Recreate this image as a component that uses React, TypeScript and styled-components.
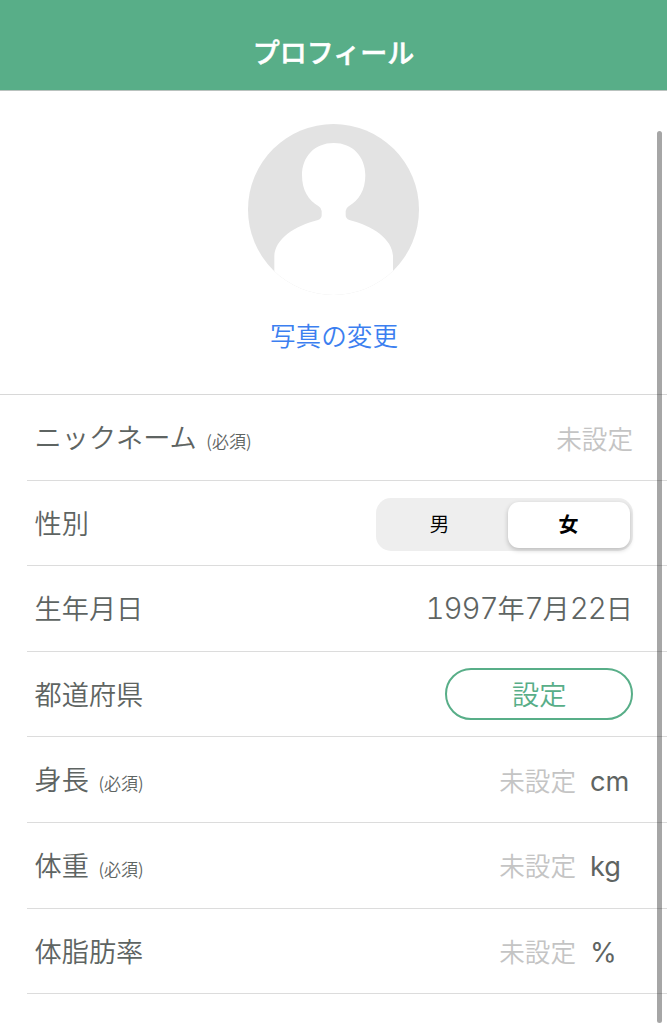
import React from 'react';
import styled, { createGlobalStyle } from 'styled-components';

const GlobalStyle = createGlobalStyle`
  * { box-sizing: border-box; }
  html, body { margin: 0; background: #fff; overflow: hidden; }
  body, button { font-family: 'Noto Sans CJK JP', sans-serif; font-weight: 350; }
`;

const Screen = styled.div`
  position: relative;
  width: 667px;
  height: 1024px;
  overflow: hidden;
  background: #fff;
  color: #5e6462;
`;

const Header = styled.header`
  display: flex;
  align-items: center;
  justify-content: center;
  height: 91px;
  padding-top: 14px;
  background: #58ae88;
  border-bottom: 1px solid #b9c2be;
`;

const Title = styled.h1`
  margin: 0;
  font-size: 27px;
  line-height: 40px;
  font-weight: 500;
  -webkit-text-stroke: 0.5px #fff;
  color: #fff;
`;

const PhotoSection = styled.section`
  display: flex;
  flex-direction: column;
  align-items: center;
  height: 304px;
  padding-top: 33px;
  border-bottom: 1px solid #d8d8d8;
`;

const Avatar = styled.svg`
  display: block;
  width: 171px;
  height: 171px;
`;

const ChangePhoto = styled.button`
  margin: 20px 0 0 1px;
  padding: 0;
  border: 0;
  background: none;
  font-size: 25.6px;
  line-height: 40px;
  color: #3c7ff0;
`;

const Row = styled.div`
  display: flex;
  align-items: center;
  justify-content: space-between;
  height: 85.6px;
  margin-left: 27px;
  padding: 0 34px 0 7.5px;
  border-bottom: 1px solid #dcdcdc;
`;

const Label = styled.div<{ $required?: boolean }>`
  display: flex;
  align-items: baseline;
  gap: 9.5px;
  padding: ${p => (p.$required ? '2px 0 0' : '0 0 2px')};
  font-size: 27.2px;
  line-height: 40px;
`;

const Required = styled.span`
  font-size: 17px;
`;

const Value = styled.div`
  display: flex;
  align-items: baseline;
  font-size: 27.2px;
  line-height: 40px;
`;

const DateValue = styled(Value)`
  padding-bottom: 2px;
`;

const Unset = styled.span`
  padding-top: 2px;
  font-size: 25.6px;
  color: #c4c4c4;
`;

const Digits = styled.span`
  font-family: Inter, 'Liberation Sans', sans-serif;
  font-size: 29.5px;
  font-weight: 350;
  font-variant-numeric: tabular-nums;
  letter-spacing: -1.1px;
`;

const Unit = styled.span`
  width: 44px;
  margin-left: 14px;
  margin-right: -1px;
  font-family: Inter, 'Liberation Sans', sans-serif;
  font-size: 27.2px;
  font-weight: 400;
`;

const Segmented = styled.div`
  display: grid;
  grid-template-columns: 1fr 122px;
  width: 257px;
  height: 53px;
  margin-top: 3px;
  padding: 4px 3px 3px 0;
  border-radius: 15px;
  background: #eeeeee;
`;

const Segment = styled.button<{ $selected?: boolean }>`
  padding: ${p => (p.$selected ? '0 1px 2px 0' : '0 5px 2px 0')};
  border: 0;
  border-radius: 11px;
  font-size: 20px;
  color: #000;
  background: ${p => (p.$selected ? '#fff' : 'transparent')};
  font-weight: ${p => (p.$selected ? 700 : 350)};
  box-shadow: ${p => (p.$selected ? '0 2px 5px rgba(0, 0, 0, 0.22)' : 'none')};
`;

const SetButton = styled.button`
  width: 188.5px;
  height: 52px;
  padding: 0 0 2px 1px;
  border: 2px solid #58ae88;
  border-radius: 26px;
  background: #fff;
  font-size: 27.2px;
  line-height: 40px;
  color: #58ae88;
`;

const ScrollThumb = styled.div`
  position: absolute;
  top: 131px;
  right: 5px;
  width: 5px;
  height: 892px;
  border-radius: 3px;
  background: rgba(0, 0, 0, 0.35);
`;

function Field({ label, required, children }: { label: string; required?: boolean; children: React.ReactNode }) {
  return (
    <Row>
      <Label $required={required}>
        {label}
        {required && <Required>(必須)</Required>}
      </Label>
      {children}
    </Row>
  );
}

function Measure({ unit }: { unit: string }) {
  return (
    <Value>
      <Unset>未設定</Unset>
      <Unit>{unit}</Unit>
    </Value>
  );
}

export default function App() {
  return (
    <>
      <GlobalStyle />
      <Screen>
        <Header>
          <Title>プロフィール</Title>
        </Header>
        <PhotoSection>
          <Avatar viewBox="39 42 513 513">
            <defs>
              <clipPath id="disc">
                <circle cx="295.5" cy="298.5" r="256.5" />
              </clipPath>
            </defs>
            <g clipPath="url(#disc)">
              <rect x="39" y="42" width="513" height="513" fill="#e3e3e3" />
              <path
                d="M296 99C239 99 201 140 201 196C201 240 220 271 251 289Q260 295 260 303V316Q260 326 249 330C178 347 118 389 118 440V560H474V440C474 389 414 347 343 330Q332 326 332 316V303Q332 295 341 289C372 271 391 240 391 196C391 140 353 99 296 99Z"
                fill="#fff"
              />
            </g>
          </Avatar>
          <ChangePhoto>写真の変更</ChangePhoto>
        </PhotoSection>
        <Field label="ニックネーム" required>
          <Value>
            <Unset>未設定</Unset>
          </Value>
        </Field>
        <Field label="性別">
          <Segmented>
            <Segment>男</Segment>
            <Segment $selected>女</Segment>
          </Segmented>
        </Field>
        <Field label="生年月日">
          <DateValue>
            <Digits>1997</Digits>年<Digits>7</Digits>月<Digits>22</Digits>日
          </DateValue>
        </Field>
        <Field label="都道府県">
          <SetButton>設定</SetButton>
        </Field>
        <Field label="身長" required>
          <Measure unit="cm" />
        </Field>
        <Field label="体重" required>
          <Measure unit="kg" />
        </Field>
        <Field label="体脂肪率">
          <Measure unit="%" />
        </Field>
        <ScrollThumb />
      </Screen>
    </>
  );
}
